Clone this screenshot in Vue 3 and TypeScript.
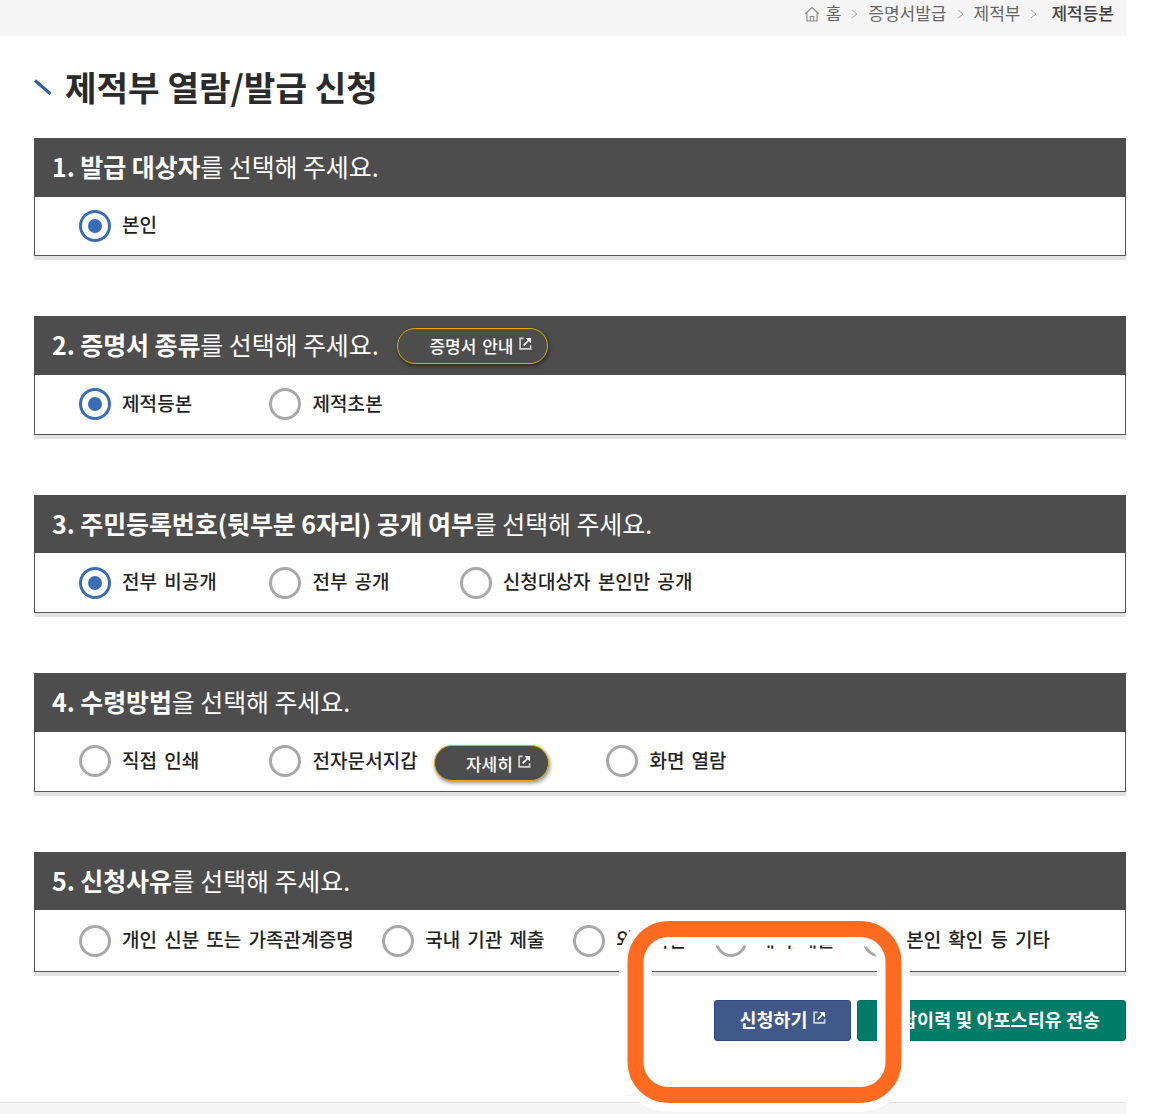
<script setup lang="ts">
interface Opt { label: string; checked?: boolean; pill?: string }
interface Sec { num: string; strong: string; rest: string; pill?: string; opts: Opt[]; tight?: boolean }

const crumbs = ['증명서발급', '제적부']

const sections: Sec[] = [
  { num: '1.', strong: '발급 대상자', rest: '를 선택해 주세요.', opts: [{ label: '본인', checked: true }] },
  {
    num: '2.', strong: '증명서 종류', rest: '를 선택해 주세요.', pill: '증명서 안내',
    opts: [{ label: '제적등본', checked: true }, { label: '제적초본' }],
  },
  {
    num: '3.', strong: '주민등록번호(뒷부분 6자리) 공개 여부', rest: '를 선택해 주세요.',
    opts: [{ label: '전부 비공개', checked: true }, { label: '전부 공개' }, { label: '신청대상자 본인만 공개' }],
  },
  {
    num: '4.', strong: '수령방법', rest: '을 선택해 주세요.',
    opts: [{ label: '직접 인쇄' }, { label: '전자문서지갑', pill: '자세히' }, { label: '화면 열람' }],
  },
  {
    num: '5.', strong: '신청사유', rest: '를 선택해 주세요.', tight: true,
    opts: [
      { label: '개인 신분 또는 가족관계증명' },
      { label: '국내 기관 제출' },
      { label: '외국기관' },
      { label: '해외 제출' },
      { label: '본인 확인 등 기타' },
    ],
  },
]
</script>

<template>
  <div class="page">
    <nav class="crumbs">
      <svg class="home" viewBox="0 0 16 16" width="16" height="16" fill="none" stroke="#8a8a8a" stroke-width="1.1">
        <path d="M1 8 8 1.500 15 8M3 6.500V15h10V6.500M6.300 15v-4.500h3.400V15" />
      </svg>
      <span class="c-home">홈</span>
      <template v-for="c in crumbs" :key="c">
        <svg class="chev" viewBox="0 0 7 10" width="7" height="10" fill="none" stroke="#aaa" stroke-width="1"><path d="M1 1l5 4-5 4" /></svg>
        <span>{{ c }}</span>
      </template>
      <svg class="chev chev-last" viewBox="0 0 7 10" width="7" height="10" fill="none" stroke="#aaa" stroke-width="1"><path d="M1 1l5 4-5 4" /></svg>
      <span class="c-now">제적등본</span>
    </nav>

    <main class="wrap">
      <h1 class="title">
        <svg class="tick" viewBox="0 0 18 16" width="18" height="16"><path d="M1 1.500 16.500 15" stroke="#2b5da8" stroke-width="3" fill="none" /></svg>
        <span>제적부 열람/발급 신청</span>
      </h1>

      <section v-for="s in sections" :key="s.num" class="sec" :class="{ 'sec-last': s.tight }">
        <header class="sec-head">
          <h2><b>{{ s.num }} {{ s.strong }}</b>{{ s.rest }}</h2>
          <a v-if="s.pill" class="pill pill-line">
            <span>{{ s.pill }}</span>
            <svg class="ext" viewBox="0 0 14 14" width="13" height="13" fill="none" stroke="currentColor" stroke-width="1.800"><path class="ext-box" d="M5 1.500H1.200V12.800H12.500V9" /><path d="M5 9 10.500 3.500" /><path d="M7 1H13V7z" fill="currentColor" stroke="none" /></svg>
          </a>
        </header>
        <div class="sec-body" :class="{ tight: s.tight }">
          <label v-for="o in s.opts" :key="o.label" class="opt" :class="{ 'opt-wide': o.pill }">
            <span class="radio" :class="{ on: o.checked }"></span>
            <span class="opt-text">{{ o.label }}</span>
            <a v-if="o.pill" class="pill pill-fill">
              <span>{{ o.pill }}</span>
              <svg class="ext" viewBox="0 0 14 14" width="13" height="13" fill="none" stroke="currentColor" stroke-width="1.800"><path class="ext-box" d="M5 1.500H1.200V12.800H12.500V9" /><path d="M5 9 10.500 3.500" /><path d="M7 1H13V7z" fill="currentColor" stroke="none" /></svg>
            </a>
          </label>
        </div>
      </section>

      <div class="actions">
        <button class="btn btn-blue" type="button">
          <span>신청하기</span>
          <svg class="ext" viewBox="0 0 14 14" width="13" height="13" fill="none" stroke="currentColor" stroke-width="1.800"><path class="ext-box" d="M5 1.500H1.200V12.800H12.500V9" /><path d="M5 9 10.500 3.500" /><path d="M7 1H13V7z" fill="currentColor" stroke="none" /></svg>
        </button>
        <button class="btn btn-green" type="button">수납이력 및 아포스티유 전송</button>
      </div>
    </main>

    <div class="foot"></div>

    <svg class="mark" width="1156" height="1114" viewBox="0 0 1156 1114" fill="none">
      <rect x="635.500" y="929" width="258" height="166" rx="33" stroke="#fff" stroke-width="33" />
      <rect x="635.500" y="929" width="258" height="166" rx="33" stroke="#ff6a21" stroke-width="16" />
    </svg>
  </div>
</template>

<style>
html, body { margin: 0; background: #fff; }
</style>

<style scoped>
.page {
  position: relative;
  width: 1156px;
  height: 1114px;
  overflow: hidden;
  font-family: "Noto Sans CJK KR", "Liberation Sans", sans-serif;
  color: #222;
}
.crumbs {
  width: 1126px;
  height: 36px;
  box-sizing: border-box;
  background: #f5f5f5;
  padding: 0 12px 10px 0;
  display: flex;
  justify-content: flex-end;
  align-items: center;
  font-size: 17px;
  color: #666;
  line-height: 26px;
}
.home { margin-right: 6px; margin-top: 2px; }
.chev { margin: 2px 10px 0 10px; }
.chev-last { margin-right: 14px; }
.c-now { color: #444; font-weight: 500; }
.wrap {
  width: 1126px;
  box-sizing: border-box;
  padding-left: 34px;
  height: 1066px;
}
.title {
  margin: 0;
  height: 102px;
  display: flex;
  align-items: center;
  font-size: 34.300px;
  font-weight: 700;
  color: #2b2b2b;
}
.title span { position: relative; top: -1px; }
.tick { margin-right: 13px; }
.sec { margin-bottom: 60.150px; }
.sec-last { margin-bottom: 0; }
.sec-head {
  height: 58.500px;
  background: #4d4d4d;
  color: #fff;
  display: flex;
  align-items: center;
  padding-left: 18px;
}
.sec-head h2 {
  margin: 0 0 3px;
  font-size: 25px;
  font-weight: 400;
  letter-spacing: -0.1px;
  white-space: nowrap;
}
.sec-head h2 b { font-weight: 700; }
.sec-body {
  box-sizing: border-box;
  height: 59.800px;
  border: 1px solid #555;
  border-top: 0;
  box-shadow: 0 4px 0 #e2e2e2;
  display: flex;
  align-items: center;
  padding-left: 44px;
}
.sec-body.tight { gap: 28.300px; height: 62px; }
.opt {
  display: flex;
  align-items: center;
  min-width: 190.400px;
  font-size: 19px;
  font-weight: 500;
  letter-spacing: 0.1px;
  word-spacing: 2.600px;
  color: #222;
}
.opt-text { position: relative; top: -2px; white-space: nowrap; }
.tight .opt { min-width: 0; }
.opt-wide { min-width: 337px; }
.radio {
  width: 32px;
  height: 32px;
  box-sizing: border-box;
  border: 3px solid #a8a8a8;
  border-radius: 50%;
  margin-right: 11px;
  background: #fff;
  flex: none;
  position: relative;
}
.radio.on { border-color: #3a6db5; }
.radio.on::after {
  content: "";
  position: absolute;
  left: 6px;
  top: 6px;
  width: 14px;
  height: 14px;
  border-radius: 50%;
  background: #3a6db5;
}
.pill {
  box-sizing: border-box;
  height: 36px;
  border-radius: 18px;
  display: inline-flex;
  align-items: center;
  border: 1.500px solid #e0ae00;
  color: #fff;
  font-size: 17px;
  font-weight: 500;
  letter-spacing: 0;
  word-spacing: 2px;
  box-shadow: 1px 2px 4px rgba(0, 0, 0, 0.45);
  padding-left: 31px;
  background: #4d4d4d;
}
.pill-line { width: 151px; margin-left: 19px; }
.pill-fill { width: 115px; margin-left: 16px; margin-top: 4px; }
.ext { margin-left: 5px; margin-top: -4px; flex: none; }
.ext-box { opacity: 0.75; }
.actions {
  display: flex;
  justify-content: flex-end;
  gap: 6px;
  margin-top: 27.700px;
}
.btn {
  height: 41px;
  box-sizing: border-box;
  border-radius: 3px;
  color: #fff;
  font-family: inherit;
  font-size: 18.500px;
  font-weight: 700;
  display: inline-flex;
  align-items: center;
  justify-content: center;
  padding: 0 0 2px;
}
.btn-blue { width: 137px; background: #41598a; border: 1px solid #2e4a85; }
.btn-green { width: 269px; background: #007c68; border: 1px solid #006f5c; }
.foot {
  height: 12px;
  width: 1126px;
  box-sizing: border-box;
  background: #f5f5f5;
  border-top: 1px solid #e0e0e0;
}
.mark { position: absolute; left: 0; top: 0; pointer-events: none; }
</style>
